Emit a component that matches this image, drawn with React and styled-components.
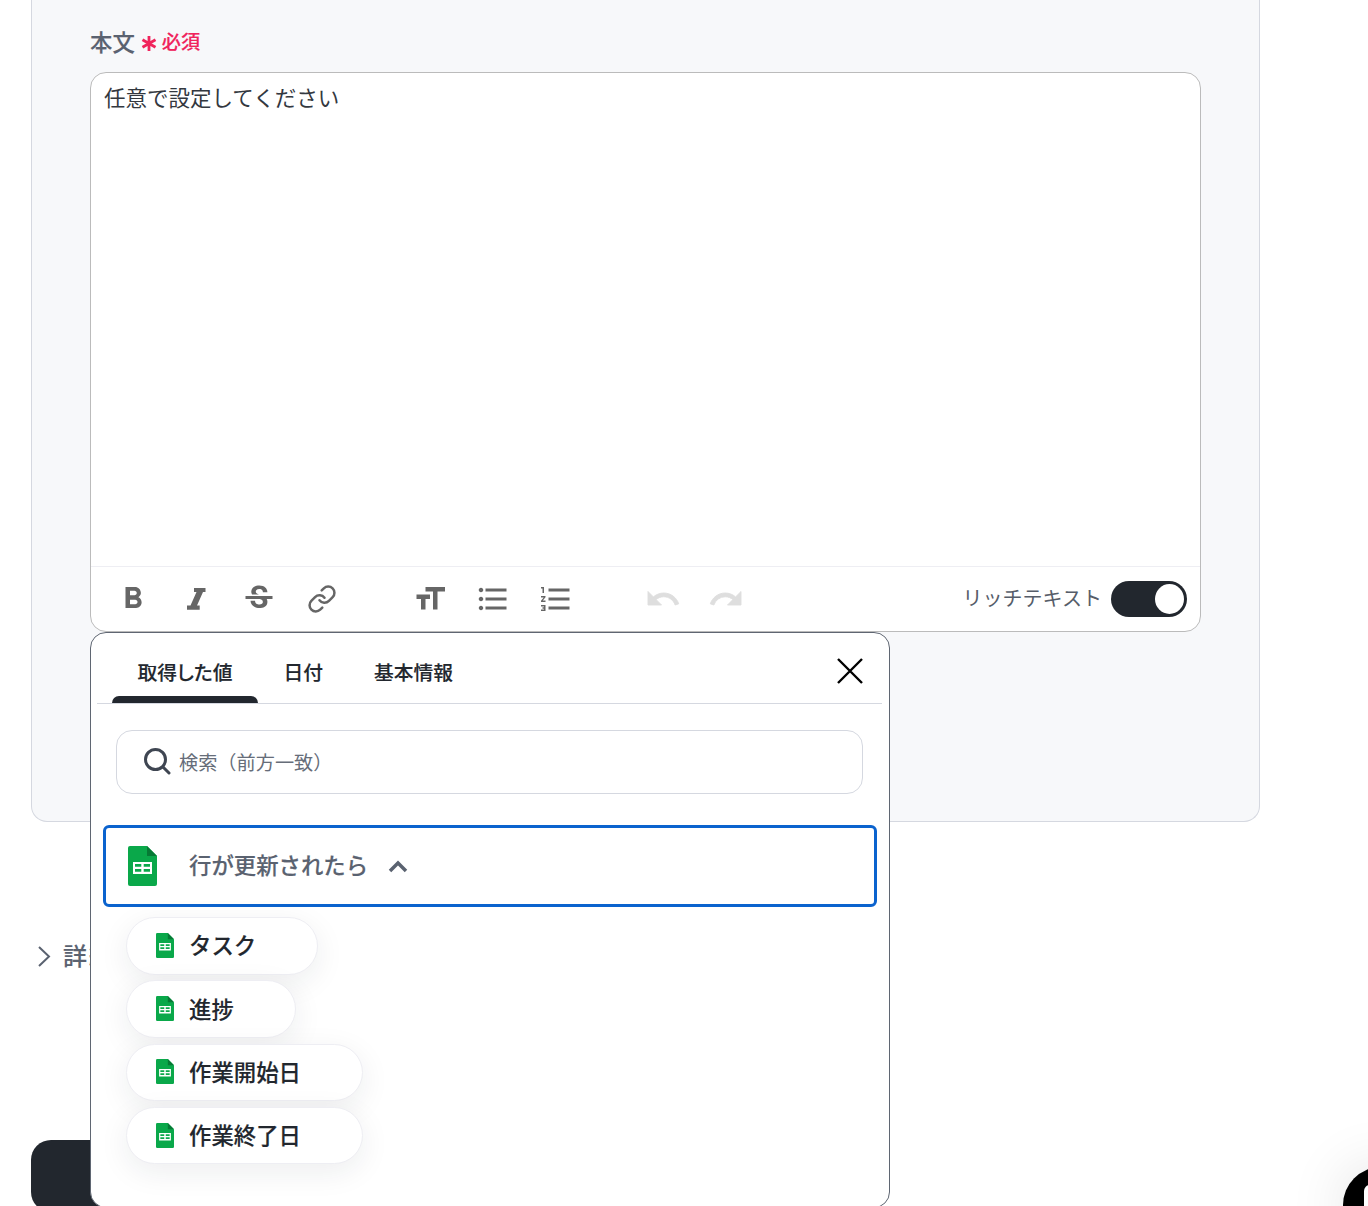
import React from 'react';
import styled, { createGlobalStyle, css } from 'styled-components';
import {
  MdFormatBold, MdStrikethroughS, MdFormatSize, MdFormatListBulleted,
  MdFormatListNumbered, MdUndo, MdRedo,
} from 'react-icons/md';
import { FiLink } from 'react-icons/fi';

const GlobalStyle = createGlobalStyle`
  html, body {
    margin: 0;
    background: #fff;
    overflow: hidden;
    font-family: "Noto Sans CJK JP", "Noto Sans", sans-serif;
  }
  * { box-sizing: border-box; }
`;

// the reference renders a bit heavier than the medium cut does here
const medium = css`
  font-weight: 500;
  -webkit-text-stroke: 0.15px currentColor;
`;

const Page = styled.div`
  position: relative;
  width: 1368px;
  height: 1206px;
  overflow: hidden;
  padding-left: 31px;
`;

const FormCard = styled.section`
  width: 1229px;
  height: 822px;
  padding: 28px 58px 0;
  background: #f7f8fa;
  border: 1px solid #d5d8e0;
  border-top: 0;
  border-radius: 0 0 16px 16px;
`;

const FieldLabel = styled.div`
  display: flex;
  align-items: center;
  height: 26px;
  margin-bottom: 18px;
  color: #5a6270;
  font-size: 22.4px;
  ${medium}
`;

const Required = styled.span`
  display: flex;
  align-items: center;
  margin-left: 6px;
  color: #f0245c;
  font-size: 19.2px;
  ${medium}

  & svg { margin-right: 5px; margin-top: 4px; }
`;

const Editor = styled.div`
  width: 1111px;
  height: 560px;
  display: flex;
  flex-direction: column;
  background: #fff;
  border: 1px solid #bbb;
  border-radius: 16px;
`;

const EditorBody = styled.div`
  flex: 1;
  padding: 8px 13px;
  color: #33383f;
  font-size: 21.5px;
  line-height: 32px;
`;

const Toolbar = styled.div`
  height: 65px;
  display: flex;
  align-items: center;
  padding: 0 13px 0 24px;
  border-top: 1px solid #eeeef3;
`;

const ToolGroup = styled.div`
  display: flex;
  align-items: center;
  gap: 27px;
  margin-right: ${({ $gap }) => $gap}px;
`;

const ToolButton = styled.span`
  width: 36px;
  height: 36px;
  display: flex;
  align-items: center;
  justify-content: center;
  color: ${({ $off }) => ($off ? '#dedede' : '#666')};
  font-size: ${({ $size }) => $size || 36}px;

  ${({ $off }) => $off && `
    & svg path:not(:first-child) { stroke: currentColor; stroke-width: 0.6; }
  `}
`;

const ToggleLabel = styled.span`
  margin-left: auto;
  margin-right: 9px;
  padding-bottom: 3px;
  color: #565d69;
  font-size: 20px;
`;

const Toggle = styled.span`
  width: 76px;
  height: 36px;
  display: flex;
  align-items: center;
  justify-content: flex-end;
  padding-right: 3px;
  background: #22272e;
  border-radius: 18px;

  &::after {
    content: '';
    width: 29px;
    height: 30px;
    background: #fff;
    border-radius: 50%;
  }
`;

const Details = styled.div`
  display: flex;
  align-items: center;
  gap: 11px;
  height: 38px;
  margin: 115px 0 0 5px;
  padding-bottom: 4px;
  color: #5a6270;
  font-size: 24px;
  letter-spacing: 2px;
  ${medium}

  & svg { margin-top: 4px; }
`;

const SaveButton = styled.div`
  width: 260px;
  height: 72px;
  margin-top: 165px;
  background: #22272e;
  border-radius: 20px;
`;

const ChatBubble = styled.div`
  position: absolute;
  left: 1343px;
  top: 1167px;
  width: 76px;
  height: 76px;
  background: #000;
  border-radius: 50%;
  box-shadow: 0 0 60px rgba(0, 0, 0, 0.12);

  &::after {
    content: '';
    position: absolute;
    left: 21px;
    top: 18px;
    width: 30px;
    height: 40px;
    background: #fff;
    border-radius: 6px;
  }
`;

const Popup = styled.div`
  position: absolute;
  left: 90px;
  top: 632px;
  width: 800px;
  height: 576px;
  padding: 0 7px 0 6px;
  background: #fff;
  border: 1px solid #5f6672;
  border-radius: 16px;
`;

const Tabs = styled.div`
  height: 71px;
  display: flex;
  align-items: stretch;
  padding-left: 15px;
  border-bottom: 1px solid #d5d8e0;
`;

const Tab = styled.div`
  position: relative;
  display: flex;
  align-items: center;
  padding: 16px 25.5px 10px;
  color: #22272e;
  font-size: 19.8px;
  font-feature-settings: "palt";
  ${medium}

  ${({ $active }) => $active && `
    &::after {
      content: '';
      position: absolute;
      left: 0;
      right: 0;
      bottom: 0;
      height: 7px;
      background: #22272e;
      border-radius: 8px 8px 0 0;
    }
  `}
`;

const CloseButton = styled.span`
  margin-left: auto;
  margin-right: 16px;
  margin-top: 22px;
  width: 32px;
  height: 32px;
`;

const SearchBox = styled.div`
  height: 64px;
  display: flex;
  align-items: center;
  gap: 8px;
  margin: 26px 19px 0;
  padding-left: 26px;
  color: #666d79;
  font-size: 19.2px;
  border: 1px solid #d5d8e0;
  border-radius: 16px;

  & svg { margin-bottom: 2px; }
`;

const SectionRow = styled.div`
  height: 82px;
  display: flex;
  align-items: center;
  margin: 31px 5px 0 6px;
  padding-left: 22px;
  color: #5a6270;
  font-size: 22.4px;
  border: 3px solid #0b63ce;
  border-radius: 6px;
`;

const SectionTitle = styled.span`
  margin-left: 32px;
  margin-right: 20px;
  padding-bottom: 4px;
  ${medium}
`;

const ChipList = styled.div`
  display: flex;
  flex-direction: column;
  align-items: flex-start;
  gap: 5.83px;
  margin: 10px 0 0 29px;
`;

const Chip = styled.div`
  height: 57.5px;
  display: flex;
  align-items: center;
  gap: 15px;
  padding: 0 61px 3px 29px;
  color: #22272e;
  font-size: 22.4px;
  ${medium}
  background: #fff;
  border: 1px solid #eeeef3;
  border-radius: 29px;
  box-shadow: 0 8px 30px rgba(30, 35, 50, 0.08);

  & svg { margin-top: 2px; }
`;

const SheetIcon = ({ width, height }) => (
  <svg width={width} height={height} viewBox="0 0 29 40">
    <path d="M2 0h17l10 10v28a2 2 0 0 1-2 2H2a2 2 0 0 1-2-2V2a2 2 0 0 1 2-2z" fill="#0aa84a" />
    <path d="M19 0l10 10H19z" fill="#067a35" />
    <path d="M5 16h19v12H5z M7 18v2.800h6.300v-2.800z M15.700 18v2.800h6.300v-2.800z M7 23v2.800h6.300v-2.800z M15.700 23v2.800h6.300v-2.800z" fill="#fff" fillRule="evenodd" />
  </svg>
);

const ItalicIcon = () => (
  <svg width="19" height="22" viewBox="0 0 19 22" fill="currentColor">
    <path d="M7 0h11.500v4H16l-6 13.500h2.700v4.200H0v-4.200h3.500l6-13.500H7z" />
  </svg>
);

const chips = ['タスク', '進捗', '作業開始日', '作業終了日'];

const App = () => (
  <Page>
    <GlobalStyle />
    <FormCard>
      <FieldLabel>
        本文
        <Required>
          <svg width="16" height="17" viewBox="0 0 16 17" stroke="#f0245c" strokeWidth="2.800">
            <path d="M8 1v15M1.500 4.700l13 7.600M14.500 4.700l-13 7.600" />
          </svg>
          必須
        </Required>
      </FieldLabel>
      <Editor>
        <EditorBody>任意で設定してください</EditorBody>
        <Toolbar>
          <ToolGroup $gap={72}>
            <ToolButton><MdFormatBold /></ToolButton>
            <ToolButton><ItalicIcon /></ToolButton>
            <ToolButton><MdStrikethroughS /></ToolButton>
            <ToolButton $size={30}><FiLink /></ToolButton>
          </ToolGroup>
          <ToolGroup $gap={71}>
            <ToolButton><MdFormatSize /></ToolButton>
            <ToolButton><MdFormatListBulleted /></ToolButton>
            <ToolButton><MdFormatListNumbered /></ToolButton>
          </ToolGroup>
          <ToolGroup $gap={0}>
            <ToolButton $off><MdUndo /></ToolButton>
            <ToolButton $off><MdRedo /></ToolButton>
          </ToolGroup>
          <ToggleLabel>リッチテキスト</ToggleLabel>
          <Toggle />
        </Toolbar>
      </Editor>
    </FormCard>
    <Details>
      <svg width="16" height="24" viewBox="0 0 16 24" fill="none" stroke="#5a6270" strokeWidth="2">
        <path d="M3 3l10 9.500L3 22" />
      </svg>
      詳細設定
    </Details>
    <SaveButton />
    <ChatBubble />
    <Popup>
      <Tabs>
        <Tab $active>取得した値</Tab>
        <Tab>日付</Tab>
        <Tab>基本情報</Tab>
        <CloseButton>
          <svg width="32" height="32" viewBox="0 0 32 32" stroke="#000" strokeWidth="2.400">
            <path d="M4 4l24 24M28 4L4 28" />
          </svg>
        </CloseButton>
      </Tabs>
      <SearchBox>
        <svg width="28" height="28" viewBox="0 0 28 28" fill="none" stroke="#3f4652" strokeWidth="3">
          <circle cx="12.500" cy="12.500" r="10" />
          <path d="M20 20l6 6" strokeLinecap="round" />
        </svg>
        検索（前方一致）
      </SearchBox>
      <SectionRow>
        <SheetIcon width={29} height={40} />
        <SectionTitle>行が更新されたら</SectionTitle>
        <svg width="20" height="14" viewBox="0 0 20 14" fill="none" stroke="#5a6270" strokeWidth="3.500">
          <path d="M2 12l8-8 8 8" />
        </svg>
      </SectionRow>
      <ChipList>
        {chips.map((chip) => (
          <Chip key={chip}>
            <SheetIcon width={18} height={25} />
            {chip}
          </Chip>
        ))}
      </ChipList>
    </Popup>
  </Page>
);

export default App;
